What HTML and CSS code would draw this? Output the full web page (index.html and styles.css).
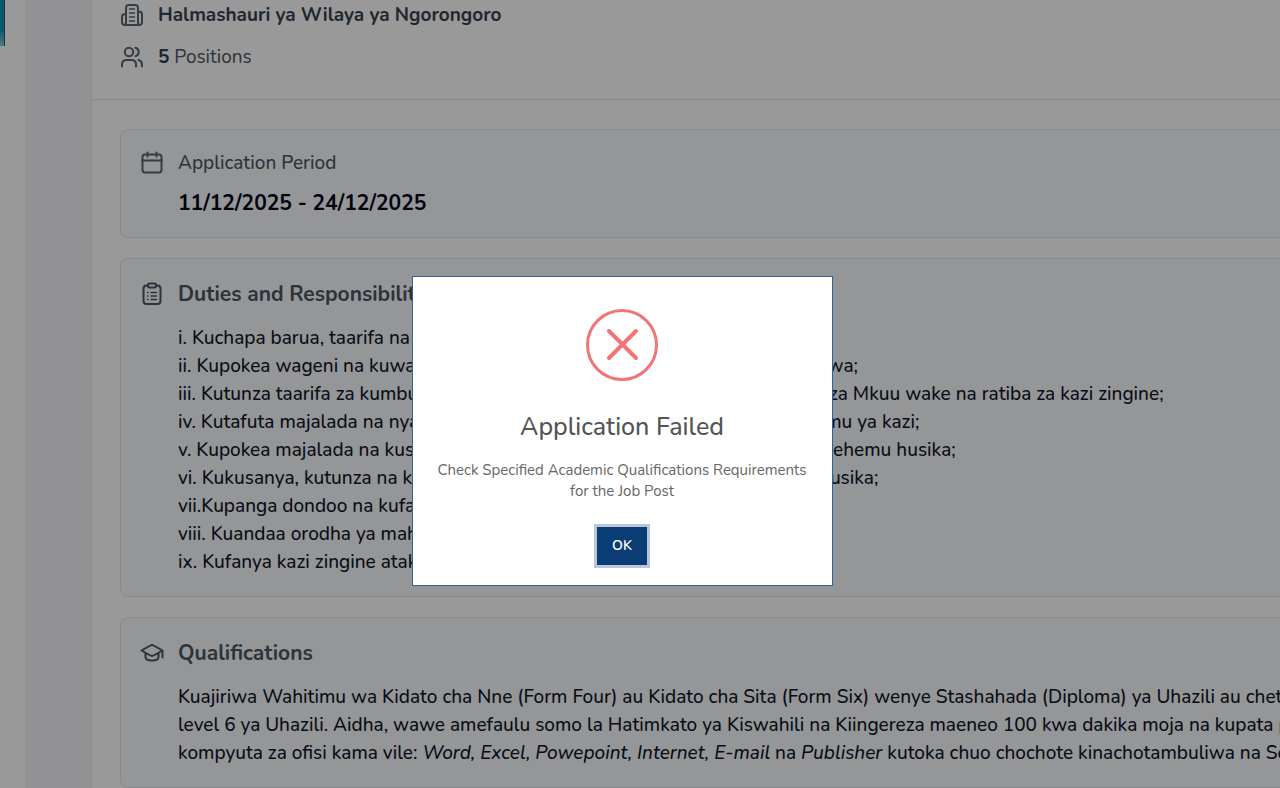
FILE: index.html
```
<!DOCTYPE html>
<html lang="sw">

<head>
  <meta charset="utf-8">
  <title>Job Details</title>
  <link rel="stylesheet" href="styles.css">
</head>

<body>
  <div class="page">
    <aside class="side">
      <div class="side-banner"></div>
    </aside>
    <main class="job">
      <header class="job-header">
        <div class="meta">
          <svg class="icon" viewBox="0 0 24 24">
            <path d="M6 22V5q0-3 3-3h6q3 0 3 3v17M6 11H5q-3 0-3 3v5q0 3 3 3h14q3 0 3-3v-7.500q0-3-3-3h-1" />
            <path class="thin" d="M9.500 6h5M9.500 10h5M9.500 14h5M9.500 18h5" />
          </svg>
          <strong>Halmashauri ya Wilaya ya Ngorongoro</strong>
        </div>
        <div class="meta">
          <svg class="icon" viewBox="0 0 24 24">
            <circle cx="9" cy="7" r="4.200" />
            <path d="M2 21.500v-2q0-4.500 4.500-4.500h5q4.500 0 4.500 4.500v2M15.500 2.800a4.300 4.300 0 0 1 0 8.300M18.500 15q3.500 1 3.500 4.500v2" />
          </svg>
          <span><strong>5</strong> Positions</span>
        </div>
      </header>

      <div class="cards">
        <section class="card">
          <svg class="icon" viewBox="0 0 24 24">
            <rect x="2.500" y="3.500" width="19" height="18" rx="2.500" />
            <path d="M2.500 9.500h19M7.500 1.500v4M16.500 1.500v4" />
          </svg>
          <div class="card-body">
            <div class="label">Application Period</div>
            <div class="period">11/12/2025 - 24/12/2025</div>
          </div>
        </section>

        <section class="card">
          <svg class="icon icon-heading" viewBox="0 0 24 24">
            <path d="M8 3.500H6.500q-3 0-3 3V19q0 3 3 3h11q3 0 3-3V6.500q0-3-3-3H16" />
            <rect x="8" y="1.500" width="8" height="4" rx="1.500" />
            <path class="thin" d="M7.500 10.500h.5M11 10.500h5.500M7.500 14h.5M11 14h5.500M7.500 17.500h.5M11 17.500h5.500" />
          </svg>
          <div class="card-body">
            <h2>Duties and Responsibilities</h2>
            <ul class="duties">
              <li>i. Kuchapa barua, taarifa na nyaraka za kawaida;</li>
              <li>ii. Kupokea wageni na kuwasaidia shida zao na kuelekeza wanaposhughulikiwa;</li>
              <li>iii. Kutunza taarifa za kumbukumbu za matukio, miadi, tarehe za vikao, safari za Mkuu wake na ratiba za kazi zingine;</li>
              <li>iv. Kutafuta majalada na nyaraka zinazohitajika katika utekelezaji wa majukumu ya kazi;</li>
              <li>v. Kupokea majalada na kusambaza kwa Maofisa waliokatika Idara/Kitengo/Sehemu husika;</li>
              <li>vi. Kukusanya, kutunza na kuyarejesha majalada na nyaraka katika sehemu husika;</li>
              <li>vii.Kupanga dondoo na kufanya maandalizi ya vikao;</li>
              <li>viii. Kuandaa orodha ya mahitaji ya vifaa vya Ofisi;</li>
              <li>ix. Kufanya kazi zingine atakazopangiwa na msimamizi.</li>
            </ul>
          </div>
        </section>

        <section class="card">
          <svg class="icon icon-heading" viewBox="0 0 24 24">
            <path d="M1.500 9.500Q11 4 12 4t10.500 5.500Q13 15 12 15T1.500 9.500zM5.500 12v4q0 3.500 6.500 3.500t6.500-3.500v-4M22.500 9.500v7" />
          </svg>
          <div class="card-body">
            <h2>Qualifications</h2>
            <p>Kuajiriwa Wahitimu wa Kidato cha Nne (Form Four) au Kidato cha Sita (Form Six) wenye Stashahada (Diploma) ya Uhazili au cheti cha NTA<br>
              level 6 ya Uhazili. Aidha, wawe amefaulu somo la Hatimkato ya Kiswahili na Kiingereza maeneo 100 kwa dakika moja na kupata programu za<br>
              kompyuta za ofisi kama vile: <em>Word, Excel, Powepoint, Internet, E-mail</em> na <em>Publisher</em> kutoka chuo chochote kinachotambuliwa na Serikali.</p>
          </div>
        </section>
      </div>
    </main>
  </div>

  <div class="overlay">
    <div class="modal" role="alertdialog" aria-labelledby="modal-title" aria-describedby="modal-text">
      <svg class="modal-icon" viewBox="0 0 72 72">
        <circle cx="36" cy="36" r="34.500" />
        <path class="cross" d="M23 22l27 27M50 22L23 49" />
      </svg>
      <h1 id="modal-title">Application Failed</h1>
      <p id="modal-text">Check Specified Academic Qualifications Requirements for the Job Post</p>
      <button class="ok" type="button">OK</button>
    </div>
  </div>
</body>

</html>
```
FILE: styles.css
```
* {
  box-sizing: border-box;
}

body {
  margin: 0;
  height: 100vh;
  overflow: hidden;
  font-family: Nunito, Lato, sans-serif;
  font-size: 19px;
  line-height: 28px;
  color: #0f172a;
  background: #f3f4f8;
}

h1,
h2,
p,
ul {
  margin: 0;
  padding: 0;
}

.page {
  display: flex;
  gap: 65px;
  min-height: 100vh;
}

.side {
  flex: 0 0 26px;
  background: #fff;
  border-right: 1px solid #f3f4f6;
}

.side-banner {
  width: 5px;
  height: 46px;
  background: linear-gradient(#0e94b8 65%, #8cc8d6);
  border-right: 1px solid #34506e;
}

.job {
  flex: 1;
  min-width: 0;
  background: #fff;
  border-left: 1px solid #e5e7eb;
}

.job-header {
  display: flex;
  flex-direction: column;
  gap: 14px;
  padding: 1px 28px 28px;
  border-bottom: 1px solid #e5e7eb;
}

.meta {
  display: flex;
  align-items: center;
  gap: 14px;
  color: #4b5563;
}

.meta strong {
  font-weight: 700;
  color: #374151;
}

.icon {
  flex: none;
  width: 24px;
  height: 24px;
  fill: none;
  stroke: #5b6472;
  stroke-width: 2;
  stroke-linecap: round;
  stroke-linejoin: round;
}

.icon-heading {
  margin-top: 2px;
  stroke: #4b5563;
}

.thin {
  stroke-width: 1.5;
}

.cards {
  display: flex;
  flex-direction: column;
  gap: 20px;
  padding: 29px 0 28px 28px;
}

/* cards run on past the right edge */
.card {
  display: flex;
  gap: 14px;
  padding: 21px 0 20px 19px;
  background: #f8fafc;
  border: 1px solid #e2e8f0;
  border-right: 0;
  border-radius: 8px 0 0 8px;
}

.card-body {
  min-width: 0;
  overflow: hidden;
  font-weight: 500;
  white-space: nowrap;
}

.label {
  margin-bottom: 14px;
  line-height: 24px;
  color: #4b5563;
}

.period {
  font-size: 21px;
  font-weight: 700;
  color: #020617;
}

h2 {
  margin-bottom: 16px;
  font-size: 21px;
  font-weight: 700;
  color: #4b5563;
}

.duties {
  list-style: none;
}

.overlay {
  position: fixed;
  inset: 0;
  display: flex;
  align-items: center;
  justify-content: center;
  padding: 74px 36px 0 0;
  background: rgba(0, 0, 0, 0.4);
}

.modal {
  display: flex;
  flex-direction: column;
  align-items: center;
  width: 421px;
  padding: 32px 24px 20px;
  text-align: center;
  background: #fff;
  border: 1px solid #2f6296;
}

.modal-icon {
  width: 72px;
  height: 72px;
  fill: none;
  stroke: #f27474;
  stroke-width: 3;
  stroke-linecap: round;
}

.cross {
  stroke-width: 4;
}

.modal h1 {
  margin: 28px 0 15px;
  font-size: 25px;
  font-weight: 500;
  line-height: 36px;
  color: #545454;
}

.modal p {
  margin-bottom: 25px;
  font-size: 15px;
  line-height: 21px;
  color: #666;
}

.ok {
  padding: 9px 15px;
  font-family: inherit;
  font-size: 14px;
  font-weight: 600;
  line-height: 20px;
  color: #fff;
  background: #0b3c74;
  border: 0;
  box-shadow: 0 0 0 3px #b8c7da;
}
```
